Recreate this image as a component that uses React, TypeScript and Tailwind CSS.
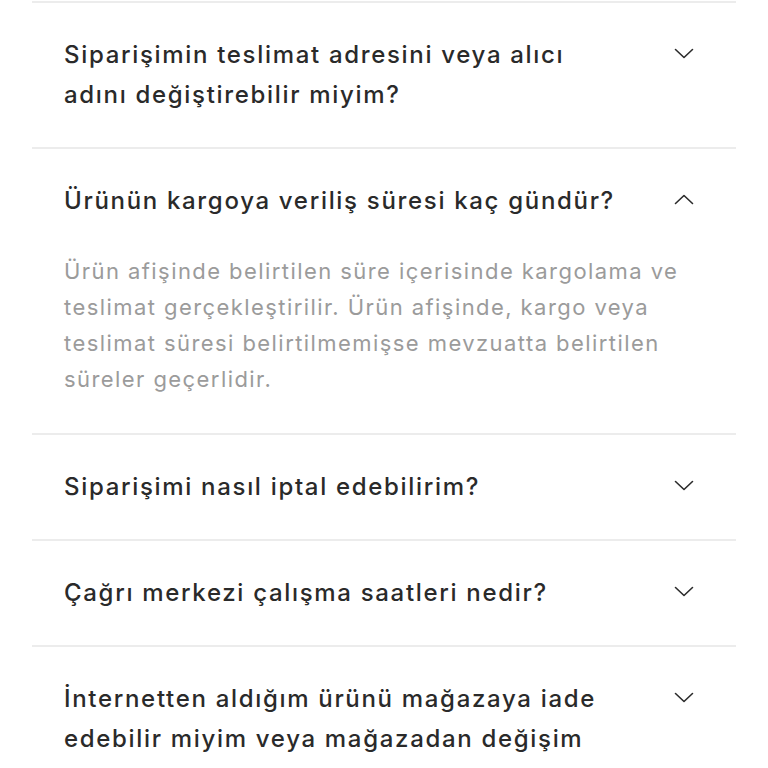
import React, { useState } from 'react';

const faqs = [
  {
    q: 'Siparişimin teslimat adresini veya alıcı adını değiştirebilir miyim?',
    a: '',
  },
  {
    q: 'Ürünün kargoya veriliş süresi kaç gündür?',
    a: 'Ürün afişinde belirtilen süre içerisinde kargolama ve teslimat gerçekleştirilir. Ürün afişinde, kargo veya teslimat süresi belirtilmemişse mevzuatta belirtilen süreler geçerlidir.',
  },
  { q: 'Siparişimi nasıl iptal edebilirim?', a: '' },
  { q: 'Çağrı merkezi çalışma saatleri nedir?', a: '' },
  {
    q: 'İnternetten aldığım ürünü mağazaya iade edebilir miyim veya mağazadan değişim yapabilir miyim?',
    a: '',
  },
];

const Chevron = ({ open }: { open: boolean }) => (
  <svg width="20" height="11" viewBox="0 0 20 11" fill="none" className={open ? 'rotate-180' : ''}>
    <path d="M1.5 1.5 10 9.5l8.5-8" stroke="#2b2b2b" strokeWidth="1.6" strokeLinecap="round" strokeLinejoin="round" />
  </svg>
);

const App = () => {
  const [openIdx, setOpenIdx] = useState<number | null>(1);

  return (
    <div className="min-h-screen bg-white px-8 pt-px font-['Inter','Noto_Sans',sans-serif]">
      {faqs.map((item, i) => {
        const open = openIdx === i;
        return (
          <div key={i} className="border-t-2 border-[#ececec]">
            <button
              type="button"
              onClick={() => setOpenIdx(open ? null : i)}
              className="flex w-full items-start justify-between pl-8 pr-[40px] py-8 text-left"
            >
              <span className="w-[566px] text-[24px] font-medium leading-10 tracking-[0.07em] text-[#2a2a2a]">
                {item.q}
              </span>
              <span className="flex h-9 w-6 shrink-0 items-center justify-center">
                <Chevron open={open} />
              </span>
            </button>
            {open && (
              <p className="px-8 pb-9 text-[22px] leading-9 tracking-[0.065em] text-[#9b9b9b]">{item.a}</p>
            )}
          </div>
        );
      })}
    </div>
  );
};

export default App;
